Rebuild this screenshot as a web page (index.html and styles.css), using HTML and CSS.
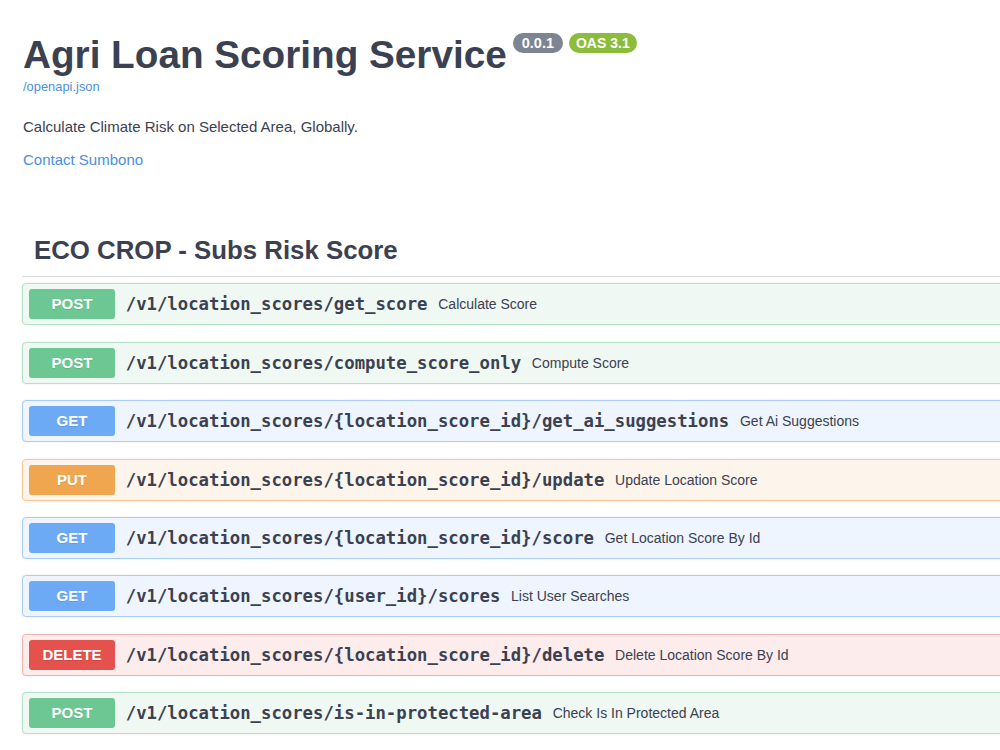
FILE: index.html
```html
<!DOCTYPE html>
<html lang="en">
<head>
<meta charset="utf-8">
<title>Agri Loan Scoring Service</title>
<link rel="stylesheet" href="styles.css">
</head>
<body>
<div class="wrapper">
  <div class="info">
    <div class="title-row">
      <h2 class="title">Agri Loan Scoring Service</h2>
      <span class="stamp stamp-version">0.0.1</span>
      <span class="stamp stamp-oas">OAS 3.1</span>
    </div>
    <a class="spec-link" href="#">/openapi.json</a>
    <p class="description">Calculate Climate Risk on Selected Area, Globally.</p>
    <a class="contact" href="#">Contact Sumbono</a>
  </div>

  <h3 class="tag">ECO CROP - Subs Risk Score</h3>

  <div class="ops">
    <div class="op op-post"><span class="method">POST</span><span class="path">/v1/location_scores/get_score</span><span class="summary">Calculate Score</span></div>
    <div class="op op-post"><span class="method">POST</span><span class="path">/v1/location_scores/compute_score_only</span><span class="summary">Compute Score</span></div>
    <div class="op op-get"><span class="method">GET</span><span class="path">/v1/location_scores/{location_score_id}/get_ai_suggestions</span><span class="summary">Get Ai Suggestions</span></div>
    <div class="op op-put"><span class="method">PUT</span><span class="path">/v1/location_scores/{location_score_id}/update</span><span class="summary">Update Location Score</span></div>
    <div class="op op-get"><span class="method">GET</span><span class="path">/v1/location_scores/{location_score_id}/score</span><span class="summary">Get Location Score By Id</span></div>
    <div class="op op-get"><span class="method">GET</span><span class="path">/v1/location_scores/{user_id}/scores</span><span class="summary">List User Searches</span></div>
    <div class="op op-delete"><span class="method">DELETE</span><span class="path">/v1/location_scores/{location_score_id}/delete</span><span class="summary">Delete Location Score By Id</span></div>
    <div class="op op-post"><span class="method">POST</span><span class="path">/v1/location_scores/is-in-protected-area</span><span class="summary">Check Is In Protected Area</span></div>
  </div>
</div>
</body>
</html>
```

FILE: styles.css
```css
html, body {
  margin: 0;
  padding: 0;
  background: #ffffff;
  overflow: hidden;
}

body {
  font-family: "Liberation Sans", Arial, sans-serif;
  color: #3b4151;
}

.wrapper {
  width: 1200px;
  padding: 0 0 0 22px;
  box-sizing: border-box;
}

.info {
  padding-top: 33px;
}

.title-row {
  display: flex;
  align-items: flex-start;
}

.title {
  margin: 0;
  font-size: 38.7px;
  line-height: 44px;
  font-weight: 700;
  color: #3b4151;
  padding-left: 1px;
}

.stamp {
  display: inline-block;
  height: 20px;
  line-height: 20px;
  border-radius: 10px;
  color: #ffffff;
  font-size: 14.5px;
  font-weight: 700;
  margin-left: 6px;
}

.stamp-version {
  background: #7d8492;
  padding: 0 9px;
}

.stamp-oas {
  background: #8cbd3a;
  padding: 0 7px;
  font-size: 14px;
}

.spec-link {
  display: block;
  margin-top: 1.5px;
  padding-left: 1px;
  font-size: 12.9px;
  line-height: 16px;
  color: #4990e2;
  text-decoration: none;
}

.description {
  margin: 22px 0 0;
  padding-left: 1px;
  font-size: 15px;
  line-height: 20px;
  color: #3b4151;
}

.contact {
  display: block;
  margin-top: 13.3px;
  padding-left: 1px;
  font-size: 15px;
  line-height: 20px;
  color: #4990e2;
  text-decoration: none;
}

.tag {
  margin: 65px 0 0;
  padding: 0 0 11.5px 12px;
  font-size: 25.8px;
  line-height: 30px;
  font-weight: 700;
  color: #3b4151;
  border-bottom: 1px solid #d8d9dc;
}

.ops {
  margin-top: 6px;
}

.op {
  display: flex;
  align-items: center;
  padding: 5px 6px;
  border: 1px solid;
  border-radius: 4px;
  margin-bottom: 16.43px;
  box-shadow: 0 0 3px rgba(0, 0, 0, 0.08);
}

.method {
  flex: none;
  width: 86px;
  height: 30px;
  line-height: 30px;
  text-align: center;
  border-radius: 3px;
  color: #ffffff;
  font-size: 15px;
  font-weight: 700;
  text-shadow: 0 1px 0 rgba(0, 0, 0, 0.1);
}

.path {
  padding: 0 10.75px;
  font-family: "DejaVu Sans Mono", "Liberation Mono", monospace;
  font-weight: 700;
  font-size: 17.3px;
  color: #3b4151;
  white-space: nowrap;
}

.summary {
  font-size: 14px;
  color: #3b4151;
  white-space: nowrap;
}

.op-post { background: #eff8f3; border-color: #b3e2c6; }
.op-post .method { background: #6cc793; }

.op-get { background: #eef5fe; border-color: #a9cdf7; }
.op-get .method { background: #6daaf5; }

.op-put { background: #fdf5eb; border-color: #f5c993; }
.op-put .method { background: #f0a54f; }

.op-delete { background: #fdecec; border-color: #f2b3b1; }
.op-delete .method { background: #e5514c; }
```
